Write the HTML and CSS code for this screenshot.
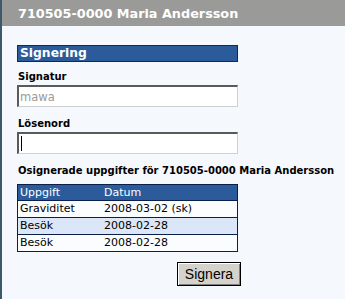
FILE: index.html
```html
<!DOCTYPE html>
<html>
<head>
<meta charset="utf-8">
<link rel="stylesheet" href="styles.css">
</head>
<body>
<div class="page">
  <div class="topbar">710505-0000 Maria Andersson</div>
  <div class="content">
    <div class="section-title">Signering</div>
    <div class="label">Signatur</div>
    <div class="field"><span class="value">mawa</span></div>
    <div class="label">Lösenord</div>
    <div class="field"><span class="caret"></span></div>
    <div class="label wide">Osignerade uppgifter för 710505-0000 Maria Andersson</div>
    <table class="tasks">
      <thead>
        <tr><th class="c1">Uppgift</th><th>Datum</th></tr>
      </thead>
      <tbody>
        <tr><td class="c1">Graviditet</td><td>2008-03-02 (sk)</td></tr>
        <tr class="alt"><td class="c1">Besök</td><td>2008-02-28</td></tr>
        <tr><td class="c1">Besök</td><td>2008-02-28</td></tr>
      </tbody>
    </table>
    <div class="actions"><button class="btn" type="button">Signera</button></div>
  </div>
</div>
</body>
</html>
```
FILE: styles.css
```css
html, body {
  margin: 0;
  padding: 0;
  height: 100%;
}
body {
  background: #f5f8fd;
  font-family: "DejaVu Sans", Verdana, sans-serif;
}
.page {
  border-left: 2px solid #3d5867;
  min-height: 299px;
  box-sizing: border-box;
}
.topbar {
  height: 26px;
  background: #9a9b98;
  color: #ffffff;
  font-weight: bold;
  font-size: 12.8px;
  line-height: 28px;
  padding-left: 16px;
  white-space: nowrap;
}
.content {
  padding: 19px 0 0 15px;
  width: 221px;
}
.section-title {
  width: 221px;
  height: 17px;
  box-sizing: border-box;
  background: #2c5b9c;
  border: 1px solid #0e2b57;
  color: #fff;
  font-weight: bold;
  font-size: 12.3px;
  line-height: 15px;
  padding-left: 2px;
}
.label {
  font-size: 10px;
  font-weight: bold;
  color: #000;
  height: 14px;
  line-height: 14px;
  margin-top: 8px;
  margin-bottom: 1px;
  padding-left: 1px;
  white-space: nowrap;
}
.label.wide {
  margin-top: 10px;
  margin-bottom: 6px;
}
.field {
  width: 221px;
  height: 22px;
  box-sizing: border-box;
  background: #fff;
  border-top: 2px solid #5a5a5a;
  border-left: 2px solid #5a5a5a;
  border-right: 1px solid #d0d0d0;
  border-bottom: 1px solid #d0d0d0;
  display: flex;
  align-items: center;
  padding-left: 1px;
  margin-bottom: 10px;
}
.value {
  font-family: "DejaVu Sans", Verdana, sans-serif;
  font-size: 11.5px;
  color: #9a9a9a;
}
.caret {
  display: inline-block;
  width: 1px;
  height: 15px;
  background: #000;
  margin-left: 1px;
}
.tasks {
  width: 221px;
  border-collapse: collapse;
  border: 1px solid #0b1f4a;
  font-size: 11px;
}
.tasks th {
  background: #2c5b9c;
  color: #fff;
  font-weight: normal;
  text-align: left;
  height: 15px;
  padding: 0 2px;
  line-height: 15px;
}
.tasks td {
  background: #fbfcfe;
  color: #000;
  height: 16px;
  padding: 0 2px;
  line-height: 16px;
  border-top: 1px solid #0b1f4a;
}
.tasks tr.alt td {
  background: #dbe7f8;
}
.tasks .c1 {
  width: 80px;
}
.actions {
  display: flex;
  justify-content: flex-end;
  margin-top: 10px;
  margin-right: -3px;
}
.btn {
  font-family: "Liberation Sans", Arial, sans-serif;
  font-size: 14px;
  color: #000;
  background: #d5d2cc;
  border: 1px solid #000;
  box-shadow: inset 1px 1px 0 #ffffff, inset -1px -1px 0 #808080;
  width: 64px;
  height: 24px;
  padding: 0;
}
```
